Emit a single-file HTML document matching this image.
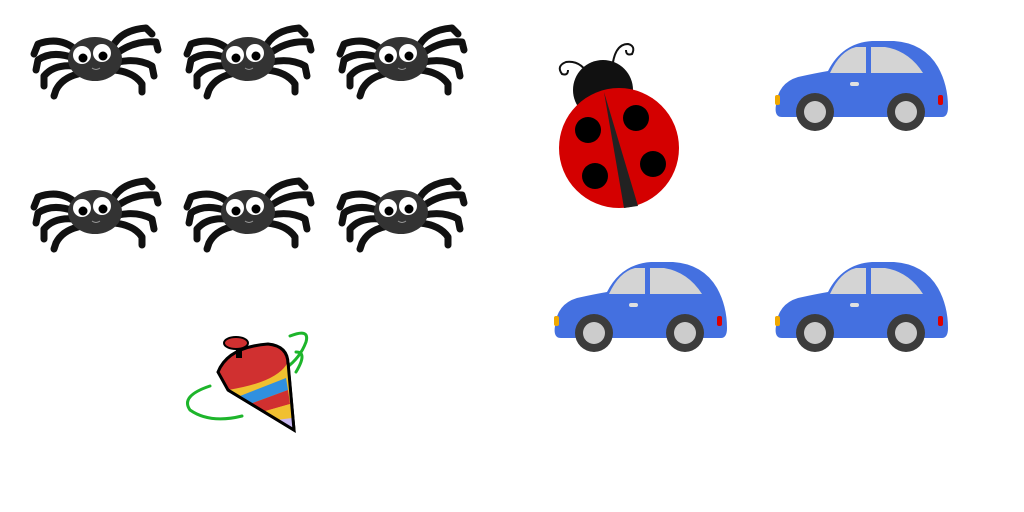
<!DOCTYPE html>
<html><head><style>html,body{margin:0;background:#fff;width:1024px;height:512px;overflow:hidden}</style></head>
<body>
<svg width="1024" height="512" viewBox="0 0 1024 512" xmlns="http://www.w3.org/2000/svg">
<defs>
<g id="sp">
 <g fill="none" stroke="#111" stroke-width="7" stroke-linecap="round" stroke-linejoin="round">
  <path d="M46,30 Q30,16 8,24 L4,34"/>
  <path d="M44,38 Q22,30 8,40 L6,50"/>
  <path d="M44,46 Q24,44 14,56 L14,66"/>
  <path d="M48,54 Q32,58 26,70 L24,76"/>
  <path d="M82,28 Q90,10 116,8 L122,14"/>
  <path d="M86,34 Q104,20 126,22 L128,30"/>
  <path d="M88,42 Q108,38 122,46 L124,56"/>
  <path d="M84,50 Q104,52 112,64 L112,72"/>
 </g>
 <ellipse cx="65" cy="39" rx="27" ry="22" fill="#333"/>
 <circle cx="52" cy="35" r="9" fill="#fff"/><circle cx="72" cy="33" r="9" fill="#fff"/>
 <circle cx="53" cy="38" r="4.5" fill="#000"/><circle cx="73" cy="36" r="4.5" fill="#000"/>
 <path d="M62,48 q4,3 8,0" stroke="#999" stroke-width="1" fill="none"/>
</g>
<g id="car">
 <path d="M12,82 q-8,0 -6,-12 q2,-22 22,-28 q18,-4 30,-6 q14,-28 44,-30 h22 q30,2 44,26 q10,18 10,40 q0,10 -6,10z" fill="#4470e0"/>
 <path d="M60,38 q10,-22 26,-26 h10 v26z" fill="#d4d4d4"/>
 <path d="M101,12 h14 q24,4 38,26 h-52z" fill="#d4d4d4"/>
 <rect x="80" y="47" width="9" height="4" rx="2" fill="#e0e0e0"/>
 <rect x="5" y="60" width="5" height="10" rx="2" fill="#f0a800"/>
 <rect x="168" y="60" width="5" height="10" rx="2" fill="#d00"/>
 <circle cx="45" cy="77" r="19" fill="#3c3c3c"/><circle cx="45" cy="77" r="11" fill="#ccc"/>
 <circle cx="136" cy="77" r="19" fill="#3c3c3c"/><circle cx="136" cy="77" r="11" fill="#ccc"/>
</g>
</defs>
<use href="#sp" x="30" y="20"/><use href="#sp" x="183" y="20"/><use href="#sp" x="336" y="20"/>
<use href="#sp" x="30" y="173"/><use href="#sp" x="183" y="173"/><use href="#sp" x="336" y="173"/>
<use href="#car" x="770" y="35"/><use href="#car" x="549" y="256"/><use href="#car" x="770" y="256"/>
<g fill="none" stroke="#111" stroke-width="2"><path d="M590,78 q-8,-18 -24,-16 q-10,4 -4,12 q6,2 6,-4"/><path d="M612,70 q2,-26 16,-26 q8,2 4,10 q-6,2 -6,-4"/></g>
<circle cx="603" cy="90" r="30" fill="#111"/>
<circle cx="619" cy="148" r="60" fill="#d40000"/>
<path d="M604,92 L624,208 L638,206z" fill="#222"/>
<circle cx="588" cy="130" r="13" fill="#000"/><circle cx="636" cy="118" r="13" fill="#000"/>
<circle cx="595" cy="176" r="13" fill="#000"/><circle cx="653" cy="164" r="13" fill="#000"/>
<g fill="none" stroke="#1db52b" stroke-width="3" stroke-linecap="round">
 <path d="M210,386 q-30,10 -20,24 q20,14 52,6"/>
 <path d="M290,336 q20,-8 16,6 q-6,16 -20,26"/>
 <path d="M296,352 q12,0 0,20"/>
</g>
<path d="M218,372 q10,-25 50,-28 q20,2 20,20 L294,430 L228,390z" fill="#d03030" stroke="#000" stroke-width="3"/>
<path d="M228,390 L294,430 L288,362 q-10,20 -60,28z" fill="#f0c030"/>
<path d="M240,396 L286,378 L288,390 L250,404z" fill="#3090e0"/>
<path d="M250,404 L288,390 L290,404 L262,412z" fill="#d03030"/>
<path d="M262,412 L290,404 L292,418 L276,420z" fill="#f0c030"/>
<path d="M276,420 L292,418 L294,430z" fill="#c8b8f0"/>
<path d="M228,390 L294,430 L288,362" fill="none" stroke="#000" stroke-width="3"/>
<rect x="236" y="346" width="6" height="12" fill="#000"/>
<ellipse cx="236" cy="343" rx="12" ry="6" fill="#d03030" stroke="#000" stroke-width="2"/>
</svg>
</body></html>
